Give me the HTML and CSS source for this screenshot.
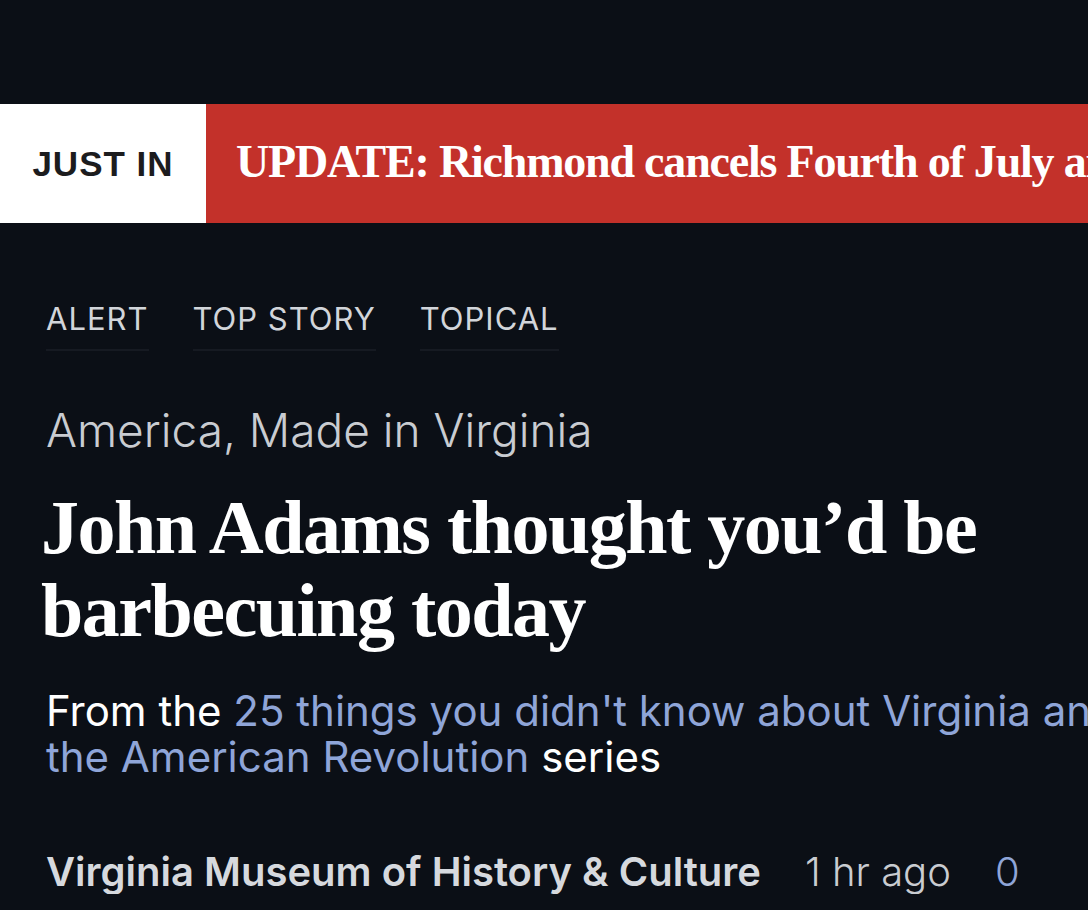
FILE: index.html
```html
<!DOCTYPE html>
<html lang="en">
<head>
  <meta charset="UTF-8">
  <meta name="viewport" content="width=device-width, initial-scale=1.0">
  <title>John Adams thought you'd be barbecuing today</title>
  <link rel="stylesheet" href="styles.css">
</head>
<body>
  <div class="breaking-bar">
    <div class="just-in">JUST IN</div>
    <div class="ticker">UPDATE: Richmond cancels Fourth of July and other events</div>
  </div>
  <div class="story">
    <ul class="tags">
      <li>ALERT</li>
      <li>TOP STORY</li>
      <li>TOPICAL</li>
    </ul>
    <div class="kicker">America, Made in Virginia</div>
    <h1 class="headline">John Adams thought you’d be barbecuing today</h1>
    <p class="dek">From the <a href="#">25 things you didn't know about Virginia and the American Revolution</a> series</p>
    <div class="byline">
      <span class="source">Virginia Museum of History &amp; Culture</span>
      <span class="time">1 hr ago</span>
      <span class="comments">0</span>
    </div>
  </div>
</body>
</html>
```

FILE: styles.css
```css
* {
  margin: 0;
  padding: 0;
  box-sizing: border-box;
}
body {
  background: #0b0f16;
  color: #fff;
  font-family: Inter, 'Liberation Sans', sans-serif;
  padding-top: 104px;
  overflow: hidden;
}
.breaking-bar {
  display: flex;
  height: 119px;
}
.just-in {
  flex: 0 0 206px;
  background: #fff;
  color: #1c1c1e;
  font-family: 'Liberation Sans', Arial, sans-serif;
  font-weight: 700;
  font-size: 35px;
  letter-spacing: 1px;
  display: flex;
  align-items: center;
  justify-content: center;
}
.ticker {
  flex: 1;
  min-width: 0;
  background: #c3312a;
  color: #fff;
  font-family: 'Liberation Serif', 'Times New Roman', serif;
  font-weight: 700;
  font-size: 46px;
  letter-spacing: -1.2px;
  white-space: nowrap;
  overflow: hidden;
  display: flex;
  align-items: center;
  padding: 0 0 5px 30px;
}
.story {
  padding: 0 46px;
}
.tags {
  list-style: none;
  display: flex;
  gap: 44px;
  margin-top: 76px;
}
.tags li {
  font-size: 31px;
  line-height: 40px;
  letter-spacing: 1px;
  color: #d2d5da;
  padding-bottom: 10px;
  border-bottom: 2px solid #161a22;
}
.kicker {
  margin-top: 53px;
  font-size: 46px;
  font-weight: 300;
  line-height: 52px;
  color: #c9ccd1;
}
.headline {
  margin: 30px 0 0 -5px;
  font-family: 'Liberation Serif', 'Times New Roman', serif;
  font-weight: 700;
  font-size: 76px;
  line-height: 83px;
  letter-spacing: -1.5px;
  color: #fff;
}
.dek {
  margin-top: 36px;
  width: 1100px;
  font-size: 42px;
  line-height: 46px;
}
.dek a {
  color: #8fa5d8;
  text-decoration: none;
}
.byline {
  margin-top: 69px;
  display: flex;
  gap: 44px;
  font-size: 40px;
  line-height: 45px;
  white-space: nowrap;
}
.source {
  font-weight: 600;
  color: #d6d9de;
}
.time {
  font-weight: 300;
  color: #c9ccd1;
}
.comments {
  font-weight: 300;
  color: #8fa5d8;
}
```
